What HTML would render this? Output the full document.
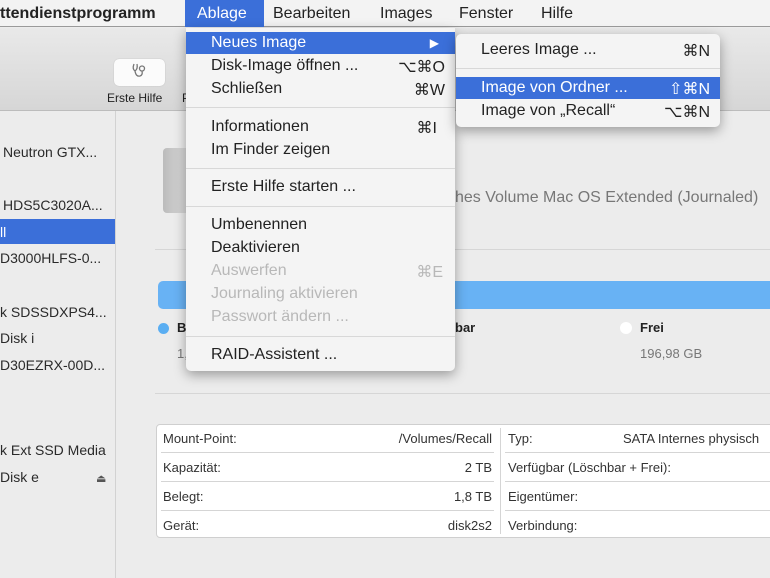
<!DOCTYPE html>
<html><head><meta charset="utf-8"><style>
*{margin:0;padding:0;box-sizing:border-box}
body{width:770px;height:578px;overflow:hidden;background:#ececec;font-family:"Liberation Sans",sans-serif;position:relative;color:#222}
.a{position:absolute;white-space:nowrap}
#mb{left:0;top:0;width:770px;height:27px;background:#f3f3f3;border-bottom:1px solid #9a9a9a}
.mt{top:5px;font-size:16px;color:#222}
#tb{left:0;top:28px;width:770px;height:83px;background:linear-gradient(#e9e9e9,#d6d6d6);border-bottom:1px solid #bcbcbc}
#sb{left:0;top:111px;width:116px;height:467px;background:#ececec;border-right:1px solid #d2d2d2}
.si{left:0;font-size:14px;color:#2a2a2a}
#menu{left:186px;top:28px;width:269px;height:343px;background:#f4f4f4;border-radius:0 0 5px 5px;box-shadow:0 4px 12px rgba(0,0,0,.35)}
.mi{left:25px;font-size:16px;color:#222}
.sc{right:10px;font-size:16px;color:#222}
.dis{color:#b8b8b8}
.sep{left:0;width:269px;height:1px;background:#d8d8d8}
.hl{background:#3b6fd9;color:#fff}
#sub{left:456px;top:34px;width:264px;height:93px;background:#f4f4f4;border-radius:5px;box-shadow:0 4px 12px rgba(0,0,0,.35)}
.tbl{left:156px;top:424px;width:620px;height:114px;background:#fff;border:1px solid #cfcfcf;border-radius:4px}
.tr{font-size:13px;color:#333}
.rv{font-size:13px;color:#333;right:278px;text-align:right}
.tl{height:1px;background:#d5d5d5}
</style></head><body>
<div class="a" id="mb"></div>
<div class="a mt" style="left:0;font-weight:bold;color:#222">ttendienstprogramm</div>
<div class="a" style="left:185px;top:0;width:79px;height:27px;background:#3b6fd9"></div>
<div class="a mt" style="left:197px;color:#fff">Ablage</div>
<div class="a mt" style="left:273px">Bearbeiten</div>
<div class="a mt" style="left:380px">Images</div>
<div class="a mt" style="left:459px">Fenster</div>
<div class="a mt" style="left:541px">Hilfe</div>

<div class="a" id="tb"></div>
<div class="a" style="left:114px;top:59px;width:51px;height:27px;background:#fbfbfb;border-radius:5px;box-shadow:0 0 1px #aaa"></div>
<svg class="a" style="left:130px;top:62px" width="20" height="18" viewBox="0 0 20 18" fill="none" stroke="#777" stroke-width="1.3"><path d="M4 2 Q2 7 5 9 Q8 7 7 2 M5 9 Q6 15 10 14 Q13 13 12 9 M12 9 A2.5 2.5 0 1 0 12 4 A2.5 2.5 0 1 0 12 9"/></svg>
<div class="a" style="left:107px;top:91px;font-size:12px;color:#222">Erste Hilfe</div>
<div class="a" style="left:182px;top:91px;font-size:12px;color:#222">P</div>

<div class="a" id="sb"></div>
<div class="a si" style="left:3px;top:144px">Neutron GTX...</div>
<div class="a si" style="left:3px;top:197px">HDS5C3020A...</div>
<div class="a" style="left:0;top:219px;width:115px;height:25px;background:#3b6fd9"></div>
<div class="a si" style="left:0;top:224px;color:#fff">ll</div>
<div class="a si" style="left:0;top:250px">D3000HLFS-0...</div>
<div class="a si" style="left:0;top:304px">k SDSSDXPS4...</div>
<div class="a si" style="left:0;top:330px">Disk i</div>
<div class="a si" style="left:0;top:357px">D30EZRX-00D...</div>
<div class="a si" style="left:0;top:442px">k Ext SSD Media</div>
<div class="a si" style="left:0;top:469px">Disk e</div>
<div class="a" style="left:96px;top:472px;font-size:11px;color:#555">&#9167;</div>

<div class="a" style="left:163px;top:148px;width:28px;height:65px;background:linear-gradient(90deg,#bbb,#e0e0e0);border-radius:4px"></div>
<div class="a" style="left:455px;top:189px;font-size:16px;color:#777">hes Volume Mac OS Extended (Journaled)</div>
<div class="a" style="left:155px;top:249px;width:615px;height:1px;background:#d6d6d6"></div>
<div class="a" style="left:158px;top:281px;width:612px;height:28px;background:#68b2f4;border-radius:5px 0 0 5px"></div>
<div class="a" style="left:158px;top:323px;width:11px;height:11px;border-radius:50%;background:#5aaef2"></div>
<div class="a" style="left:177px;top:320px;font-size:13px;font-weight:bold">B</div>
<div class="a" style="left:177px;top:346px;font-size:13px;color:#777">1,</div>
<div class="a" style="left:455px;top:320px;font-size:13px;font-weight:bold">bar</div>
<div class="a" style="left:620px;top:322px;width:12px;height:12px;border-radius:50%;background:#fff"></div>
<div class="a" style="left:640px;top:320px;font-size:13px;font-weight:bold">Frei</div>
<div class="a" style="left:640px;top:346px;font-size:13px;color:#777">196,98 GB</div>
<div class="a" style="left:155px;top:393px;width:615px;height:1px;background:#d6d6d6"></div>

<div class="a tbl"></div>
<div class="a tr" style="left:163px;top:431px">Mount-Point:</div>
<div class="a rv" style="top:431px">/Volumes/Recall</div>
<div class="a tr" style="left:163px;top:460px">Kapazität:</div>
<div class="a rv" style="top:460px">2 TB</div>
<div class="a tr" style="left:163px;top:489px">Belegt:</div>
<div class="a rv" style="top:489px">1,8 TB</div>
<div class="a tr" style="left:163px;top:518px">Gerät:</div>
<div class="a rv" style="top:518px">disk2s2</div>
<div class="a tr" style="left:508px;top:431px">Typ:</div>
<div class="a tr" style="left:623px;top:431px">SATA Internes physisch</div>
<div class="a tr" style="left:508px;top:460px">Verfügbar (Löschbar + Frei):</div>
<div class="a tr" style="left:508px;top:489px">Eigentümer:</div>
<div class="a tr" style="left:508px;top:518px">Verbindung:</div>
<div class="a tl" style="left:161px;top:452px;width:333px"></div>
<div class="a tl" style="left:161px;top:481px;width:333px"></div>
<div class="a tl" style="left:161px;top:510px;width:333px"></div>
<div class="a tl" style="left:505px;top:452px;width:265px"></div>
<div class="a tl" style="left:505px;top:481px;width:265px"></div>
<div class="a tl" style="left:505px;top:510px;width:265px"></div>
<div class="a" style="left:500px;top:428px;width:1px;height:106px;background:#d5d5d5"></div>

<div class="a" id="menu">
<div class="a hl" style="left:0;top:4px;width:269px;height:22px"></div>
<div class="a mi" style="top:6px;color:#fff">Neues Image</div>
<div class="a" style="right:16px;top:8px;font-size:12px;color:#fff">&#9654;</div>
<div class="a mi" style="top:29px">Disk-Image öffnen ...</div><div class="a sc" style="top:29px">⌥⌘O</div>
<div class="a mi" style="top:52px">Schließen</div><div class="a sc" style="top:52px">⌘W</div>
<div class="a sep" style="top:79px"></div>
<div class="a mi" style="top:90px">Informationen</div><div class="a sc" style="top:90px;right:18px">⌘I</div>
<div class="a mi" style="top:113px">Im Finder zeigen</div>
<div class="a sep" style="top:140px"></div>
<div class="a mi" style="top:150px">Erste Hilfe starten ...</div>
<div class="a sep" style="top:178px"></div>
<div class="a mi" style="top:188px">Umbenennen</div>
<div class="a mi" style="top:211px">Deaktivieren</div>
<div class="a mi dis" style="top:234px">Auswerfen</div><div class="a sc dis" style="top:234px;right:12px">⌘E</div>
<div class="a mi dis" style="top:257px">Journaling aktivieren</div>
<div class="a mi dis" style="top:280px">Passwort ändern ...</div>
<div class="a sep" style="top:308px"></div>
<div class="a mi" style="top:318px">RAID-Assistent ...</div>
</div>

<div class="a" id="sub">
<div class="a" style="left:25px;top:7px;font-size:16px">Leeres Image ...</div><div class="a" style="right:10px;top:7px;font-size:16px">⌘N</div>
<div class="a" style="left:0;top:34px;width:264px;height:1px;background:#d8d8d8"></div>
<div class="a hl" style="left:0;top:43px;width:264px;height:22px"></div>
<div class="a" style="left:25px;top:45px;font-size:16px;color:#fff">Image von Ordner ...</div><div class="a" style="right:10px;top:45px;font-size:16px;color:#fff">⇧⌘N</div>
<div class="a" style="left:25px;top:68px;font-size:16px">Image von „Recall“</div><div class="a" style="right:10px;top:68px;font-size:16px">⌥⌘N</div>
</div>
</body></html>
